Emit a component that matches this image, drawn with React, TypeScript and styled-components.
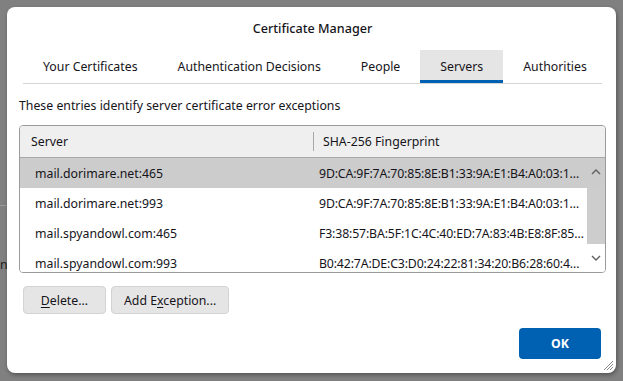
import styled, { createGlobalStyle } from 'styled-components';

const TABS = [
  'Your Certificates',
  'Authentication Decisions',
  'People',
  'Servers',
  'Authorities',
];

// fingerprints as the column shows them, already cut to its width
const ENTRIES = [
  {
    server: 'mail.dorimare.net:465',
    fingerprint: '9D:CA:9F:7A:70:85:8E:B1:33:9A:E1:B4:A0:03:1…',
  },
  {
    server: 'mail.dorimare.net:993',
    fingerprint: '9D:CA:9F:7A:70:85:8E:B1:33:9A:E1:B4:A0:03:1…',
  },
  {
    server: 'mail.spyandowl.com:465',
    fingerprint: 'F3:38:57:BA:5F:1C:4C:40:ED:7A:83:4B:E8:8F:85…',
  },
  {
    server: 'mail.spyandowl.com:993',
    fingerprint: 'B0:42:7A:DE:C3:D0:24:22:81:34:20:B6:28:60:4…',
  },
];

const GlobalStyle = createGlobalStyle`
  html, body {
    margin: 0;
    padding: 0;
    background: #808080;
  }

  body {
    font-family: 'Noto Sans', 'Open Sans', sans-serif;
    font-size: 12.3px;
    color: #15141a;
  }
`;

export default function App() {
  return (
    <>
      <GlobalStyle />
      <Backdrop>
        <BehindLine />
        <BehindText>n</BehindText>
        <Dialog>
          <Title>Certificate Manager</Title>
          <TabBar>
            {TABS.map((tab) => (
              <Tab key={tab} className={tab === 'Servers' ? 'selected' : ''}>
                {tab}
              </Tab>
            ))}
          </TabBar>
          <Description>
            These entries identify server certificate error exceptions
          </Description>
          <Table>
            <HeaderRow>
              <HeaderCell>Server</HeaderCell>
              <HeaderCell $divided>SHA-256 Fingerprint</HeaderCell>
            </HeaderRow>
            <Body>
              <Rows>
                {ENTRIES.map((entry, i) => (
                  <Row key={entry.server} $selected={i === 0}>
                    <ServerCell>{entry.server}</ServerCell>
                    <FingerprintCell>{entry.fingerprint}</FingerprintCell>
                  </Row>
                ))}
              </Rows>
              <Scrollbar>
                <ScrollArrow>
                  <svg width='10' height='6' viewBox='0 0 10 6'>
                    <path
                      d='M1 5 L5 1 L9 5'
                      fill='none'
                      stroke='#606060'
                      strokeWidth='1.4'
                    />
                  </svg>
                </ScrollArrow>
                <Thumb />
                <ScrollArrow>
                  <svg width='10' height='6' viewBox='0 0 10 6'>
                    <path
                      d='M1 1 L5 5 L9 1'
                      fill='none'
                      stroke='#606060'
                      strokeWidth='1.4'
                    />
                  </svg>
                </ScrollArrow>
              </Scrollbar>
            </Body>
          </Table>
          <ActionRow>
            <Button>
              <u>D</u>elete...
            </Button>
            <Button>
              Add E<u>x</u>ception...
            </Button>
          </ActionRow>
          <Footer>
            <OkButton>OK</OkButton>
          </Footer>
          <Grip width='11' height='11' viewBox='0 0 11 11'>
            <path
              d='M10 1 L1 10 M10 4 L4 10 M10 7 L7 10'
              stroke='#8a8a8a'
              strokeWidth='1'
            />
          </Grip>
        </Dialog>
      </Backdrop>
    </>
  );
}

const Backdrop = styled.div`
  position: relative;
  width: 623px;
  height: 381px;
  padding: 7px;
  box-sizing: border-box;
  overflow: hidden;
`;

const BehindLine = styled.div`
  position: absolute;
  left: 0;
  top: 205px;
  width: 10px;
  height: 1px;
  background: #9a9a9a;
`;

const BehindText = styled.span`
  position: absolute;
  left: 0;
  top: 256px;
  color: #202020;
`;

const Dialog = styled.div`
  position: relative;
  width: 609px;
  height: 366px;
  background: #ffffff;
  border-radius: 8px;
  box-shadow: 1px 2px 4px rgba(0, 0, 0, 0.35);
  display: flex;
  flex-direction: column;
  padding: 0 10px 0 12px;
  box-sizing: border-box;
`;

const Title = styled.div`
  height: 43px;
  display: flex;
  align-items: center;
  justify-content: center;
  font-size: 12.6px;
  font-weight: 500;
`;

const TabBar = styled.div`
  display: flex;
  margin: 0 4px;
  border-bottom: 1px solid #d5d5d5;
`;

const Tab = styled.div`
  height: 33px;
  padding: 3px 20px 0;
  display: flex;
  align-items: center;
  white-space: nowrap;
  box-sizing: border-box;
  border-bottom: 3px solid transparent;

  &.selected {
    background: #e5e5e5;
    border-bottom-color: #0061b2;
  }
`;

const Description = styled.div`
  margin-top: 13px;
  height: 18px;
  line-height: 18px;
  white-space: nowrap;
`;

const Table = styled.div`
  margin-top: 10px;
  height: 148px;
  box-sizing: border-box;
  border: 1px solid #9b9b9b;
  border-radius: 4px;
  overflow: hidden;
  display: flex;
  flex-direction: column;
`;

const HeaderRow = styled.div`
  display: grid;
  grid-template-columns: 293px 1fr;
  height: 31px;
  flex-shrink: 0;
  background: #efefef;
  border-bottom: 1px solid #a8a8a8;
`;

const HeaderCell = styled.div<{ $divided?: boolean }>`
  display: flex;
  align-items: center;
  padding-left: ${(p) => (p.$divided ? '9px' : '11px')};
  border-left: ${(p) => (p.$divided ? '1px solid #a8a8a8' : 'none')};
  margin: ${(p) => (p.$divided ? '6px 0' : '0')};
`;

const Body = styled.div`
  flex: 1;
  display: flex;
  overflow: hidden;
`;

const Rows = styled.div`
  flex: 1;
  min-width: 0;
  display: flex;
  flex-direction: column;
`;

const Row = styled.div<{ $selected?: boolean }>`
  display: grid;
  grid-template-columns: 293px minmax(0, 1fr);
  height: 30px;
  flex-shrink: 0;
  align-items: center;
  background: ${(p) => (p.$selected ? '#cccccc' : '#ffffff')};
`;

const ServerCell = styled.div`
  padding-left: 15px;
  white-space: nowrap;
`;

const FingerprintCell = styled.div`
  padding-left: 6px;
  white-space: nowrap;
  letter-spacing: -0.15px;
  overflow: hidden;
`;

const Scrollbar = styled.div`
  width: 18px;
  flex-shrink: 0;
  display: flex;
  flex-direction: column;
  background: linear-gradient(#cccccc 0 30px, #ffffff 30px);
`;

const ScrollArrow = styled.div`
  height: 16px;
  display: flex;
  align-items: center;
  justify-content: center;
  flex-shrink: 0;
  margin: 6px 0;
`;

const Thumb = styled.div`
  flex: 1;
  background: #cdcdcd;
`;

const ActionRow = styled.div`
  display: flex;
  gap: 5px;
  margin-top: 13px;
  padding-left: 4px;
`;

const Button = styled.button`
  font: inherit;
  color: inherit;
  height: 28px;
  min-width: 83px;
  padding: 0 12px;
  background: #e5e5e5;
  border: 1px solid #d3d3d3;
  border-radius: 4px;

  u {
    text-underline-offset: 2px;
  }
`;

const Footer = styled.div`
  display: flex;
  justify-content: flex-end;
  margin-top: 14px;
  padding-right: 5px;
`;

const OkButton = styled.button`
  font: inherit;
  font-weight: 700;
  color: #ffffff;
  width: 82px;
  height: 31px;
  background: #0061b2;
  border: none;
  border-radius: 4px;
`;

const Grip = styled.svg`
  position: absolute;
  right: 2px;
  bottom: 2px;
`;
